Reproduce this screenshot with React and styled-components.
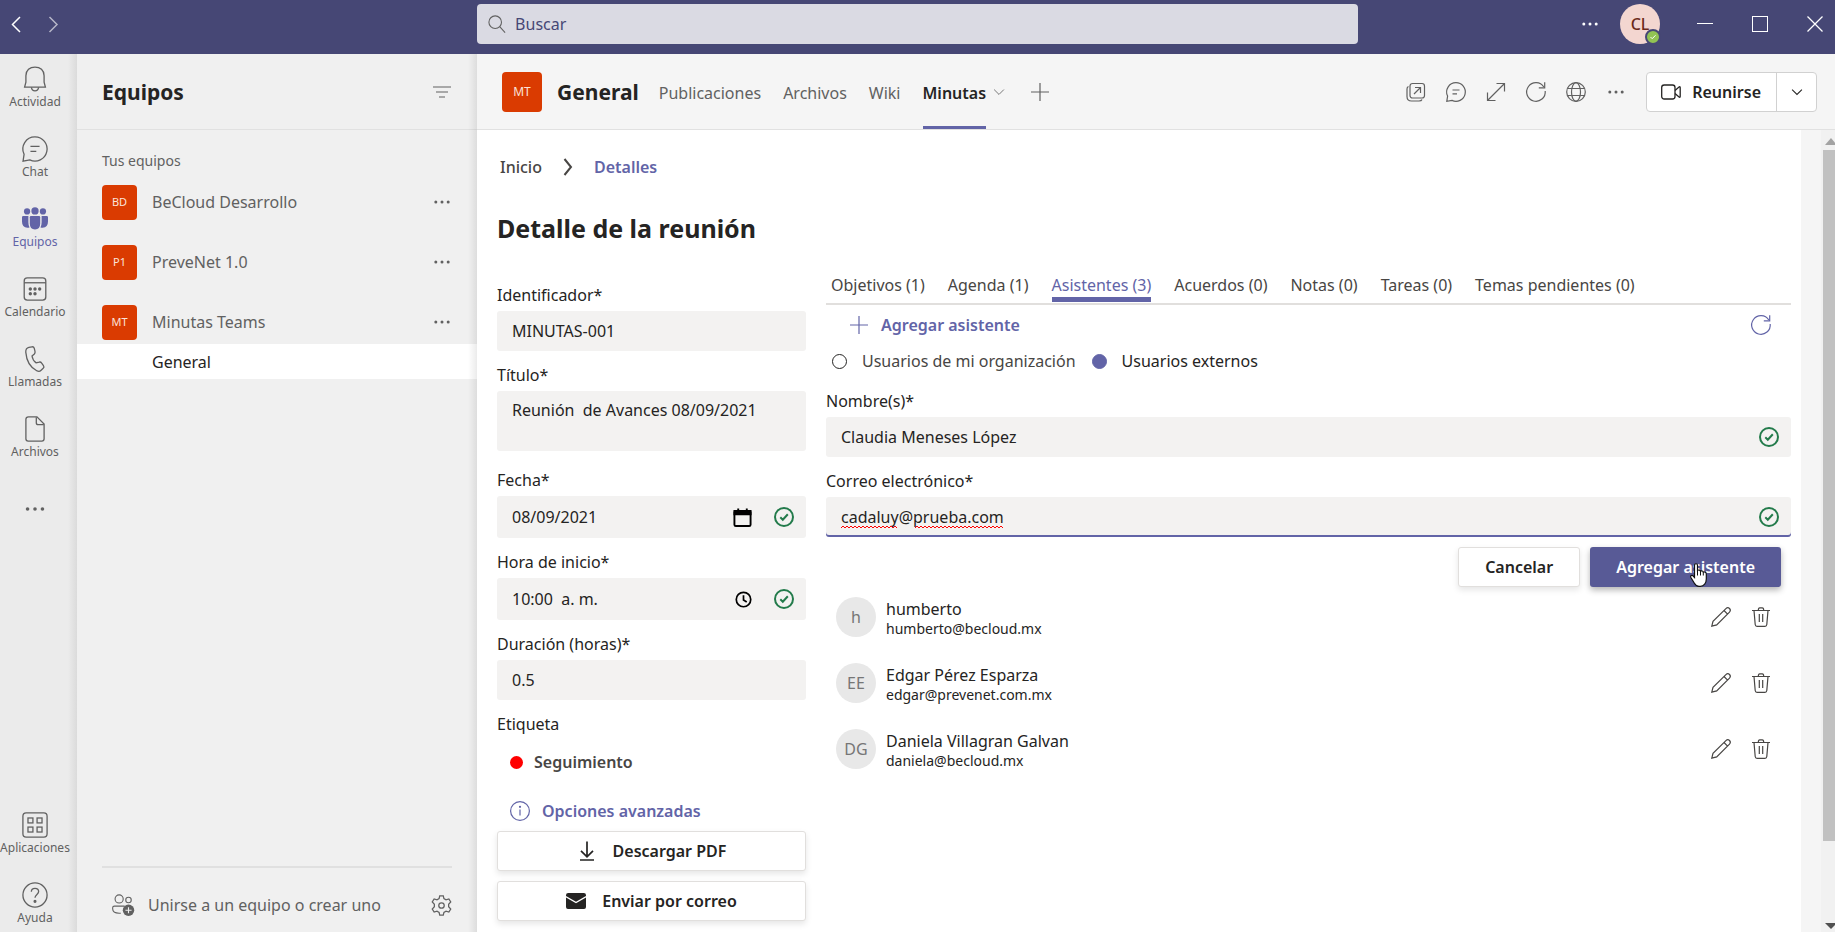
import { useState } from "react";
import { createGlobalStyle, styled } from "styled-components";

const railItems = [
  { label: "Actividad", icon: "bell" },
  { label: "Chat", icon: "chat" },
  { label: "Equipos", icon: "teams", active: true },
  { label: "Calendario", icon: "calendar" },
  { label: "Llamadas", icon: "phone" },
  { label: "Archivos", icon: "file" },
];

const teams = [
  { initials: "BD", name: "BeCloud Desarrollo" },
  { initials: "P1", name: "PreveNet 1.0" },
  { initials: "MT", name: "Minutas Teams" },
];

const meetingTabs = [
  "Objetivos (1)",
  "Agenda (1)",
  "Asistentes (3)",
  "Acuerdos (0)",
  "Notas (0)",
  "Tareas (0)",
  "Temas pendientes (0)",
];

const attendees = [
  { initials: "h", name: "humberto", email: "humberto@becloud.mx" },
  { initials: "EE", name: "Edgar Pérez Esparza", email: "edgar@prevenet.com.mx" },
  { initials: "DG", name: "Daniela Villagran Galvan", email: "daniela@becloud.mx" },
];

const shapes = {
  back: <path d="M12 3L4.500 10.500L12 18" />,
  forward: <path d="M4.500 3L12 10.500L4.500 18" />,
  search: (
    <>
      <circle cx="8" cy="8" r="7" />
      <path d="M13 13L19 19.500" />
    </>
  ),
  dots: (
    <g fill="currentColor" stroke="none">
      <circle cx="3.800" cy="10" r="1.500" />
      <circle cx="10" cy="10" r="1.500" />
      <circle cx="16.200" cy="10" r="1.500" />
    </g>
  ),
  minimize: <path d="M2 9.500H18" />,
  maximize: <rect x="2.500" y="2.500" width="15" height="15" />,
  close: <path d="M2.500 2.500L17.500 17.500M17.500 2.500L2.500 17.500" />,
  bell: (
    <>
      <path d="M2 16.300L3 12.500V7.500C3 3.300 6 .8 10 .8S17 3.300 17 7.500V12.500L18 16.300Z" />
      <path d="M7.200 16.500C7.500 18.300 8.500 19.200 10 19.200S12.500 18.300 12.800 16.500" />
    </>
  ),
  chat: (
    <>
      <path d="M10 .7A9.300 9.300 0 1 1 6 18.400L.8 19.300L1.600 14.100A9.300 9.300 0 0 1 10 .7Z" />
      <path d="M6.500 8H13.500M6.500 11.800H11" />
    </>
  ),
  teams: (
    <g fill="currentColor" stroke="none">
      <circle cx="3.900" cy="4.200" r="2.400" />
      <circle cx="16.100" cy="4.200" r="2.400" />
      <circle cx="10" cy="3.800" r="2.800" />
      <path d="M1 7.600H4.900V12.500Q4.900 15 5.800 16.500Q0 17.500 0 12V8.600Q0 7.600 1 7.600Z" />
      <path d="M19 7.600H15.100V12.500Q15.100 15 14.200 16.500Q20 17.500 20 12V8.600Q20 7.600 19 7.600Z" />
      <path d="M6.900 7.600H13.100Q14 7.600 14 8.600V13.500Q14 18.100 10 18.100T6 13.500V8.600Q6 7.600 6.900 7.600Z" />
    </g>
  ),
  calendar: (
    <>
      <rect x="1.700" y="1.500" width="16.600" height="17" rx="2.400" />
      <path d="M1.700 5.200H18.300" />
      <g fill="currentColor" stroke="none">
        <circle cx="6.400" cy="10" r="1.300" />
        <circle cx="10" cy="10" r="1.300" />
        <circle cx="13.600" cy="10" r="1.300" />
        <circle cx="6.400" cy="13.700" r="1.300" />
        <circle cx="10" cy="13.700" r="1.300" />
      </g>
    </>
  ),
  phone: (
    <path d="M5.300 1L7.700.6C8.500.5 9.200 1 9.400 1.700L10 4.200C10.200 5 10 5.600 9.500 6.100L7.700 7.700C8 9.700 9.400 12 10.900 13L13.200 12.400C13.900 12.200 14.600 12.400 15 13L16.500 15.100C17 15.800 16.900 16.700 16.300 17.200L14.700 18.700C13.900 19.500 12.700 19.700 11.600 19.200C6.500 16.700 3.400 11 2.900 4.700C2.800 2.500 3.500 1.400 5.300 1Z" />
  ),
  file: (
    <>
      <path d="M5 .7H11.500L17 6.200V17.500Q17 19.300 15.200 19.300H4.800Q3 19.300 3 17.500V2.500Q3 .7 5 .7Z" />
      <path d="M11 .9V5.200Q11 6.700 12.500 6.700H16.800" />
    </>
  ),
  apps: (
    <>
      <rect x=".7" y=".7" width="18.600" height="18.600" rx="2.500" />
      <rect x="4.600" y="4.600" width="3.800" height="3.800" />
      <rect x="11.600" y="4.600" width="3.800" height="3.800" />
      <rect x="4.600" y="11.600" width="3.800" height="3.800" />
      <rect x="11.600" y="11.600" width="3.800" height="3.800" />
    </>
  ),
  help: (
    <>
      <circle cx="10" cy="10" r="9.300" />
      <path d="M7.200 7.500C7.200 5.800 8.300 4.900 10 4.900S12.800 5.900 12.800 7.400C12.800 9.600 10 9.600 10 12.200" />
      <circle cx="10" cy="14.900" r=".7" fill="currentColor" />
    </>
  ),
  filter: <path d="M1 5H19M4 10H16M7 15H13" />,
  joinTeam: (
    <>
      <circle cx="6.500" cy="4.500" r="3.700" />
      <circle cx="15" cy="5.500" r="2.500" />
      <path d="M11.500 11H2.200Q.6 11 .6 12.600V13.500Q.6 17.500 6.500 17.500H8" />
      <circle cx="15" cy="14.800" r="5.200" fill="currentColor" stroke="none" />
      <path d="M15 12V17.600M12.200 14.800H17.800" stroke="#f0f0f0" />
    </>
  ),
  gear: (
    <>
      <circle cx="10" cy="10" r="2.600" />
      <path d="M8.300.8H11.700L12.300 3.500L14.300 4.600L17 3.800L18.800 6.700L16.800 8.800V11.200L18.800 13.300L17 16.200L14.300 15.400L12.300 16.500L11.700 19.200H8.300L7.700 16.500L5.700 15.400L3 16.200L1.200 13.300L3.200 11.200V8.800L1.200 6.700L3 3.800L5.700 4.600L7.700 3.500Z" />
    </>
  ),
  down: <path d="M3 6.500L10 13.500L17 6.500" />,
  plus: <path d="M10 1V19M1 10H19" />,
  popout: (
    <>
      <rect x="4" y="1.500" width="14.500" height="14.500" rx="2.500" />
      <path d="M2.500 4.500Q1 5 1 7V14.500Q1 19 5.500 19H13Q15.500 19 16 17.500" />
      <path d="M8 12L14.500 5.500M9 5.500H14.500V11" />
    </>
  ),
  expand: <path d="M1.500 18.500L18.500 1.500M10.500 1.500H18.500V9.500M1.500 10.500V18.500H9.500" />,
  refresh: (
    <>
      <path d="M19.200 9A9.300 9.300 0 1 1 17.800 5" />
      <path d="M18.700.3V5.800H12.800" />
    </>
  ),
  globe: (
    <>
      <circle cx="10" cy="10" r="9.300" />
      <ellipse cx="10" cy="10" rx="4.500" ry="9.300" />
      <path d="M1.500 6.500H18.500M1.500 13.500H18.500" />
    </>
  ),
  camera: (
    <>
      <rect x=".7" y="3" width="13.300" height="14" rx="2.500" />
      <path d="M14 8.500L18 5Q19.200 4.300 19.200 5.800V14.200Q19.200 15.700 18 15L14 11.500" />
    </>
  ),
  crumb: <path d="M6.500 2L13 10L6.500 18" />,
  date: (
    <>
      <path d="M1.500 4.500Q1.500 3 3 3H17Q18.500 3 18.500 4.500V17.500Q18.500 19 17 19H3Q1.500 19 1.500 17.500Z" />
      <path d="M1.500 3H18.500V6.500H1.500Z" fill="currentColor" />
      <path d="M5.500 .5V4M14.500 .5V4" />
    </>
  ),
  clock: (
    <>
      <circle cx="10" cy="10" r="8.500" />
      <path d="M10 5V10.500L13.800 13" />
    </>
  ),
  check: (
    <>
      <circle cx="10" cy="10" r="9" />
      <path d="M6.300 10.300L8.800 12.700L13.800 7.300" />
    </>
  ),
  info: (
    <>
      <circle cx="10" cy="10" r="9.400" />
      <path d="M10 8.500V14.500" />
      <circle cx="10" cy="5.800" r=".5" fill="currentColor" />
    </>
  ),
  download: <path d="M10 .5V15.500M4 9.800L10 15.800L16 9.800M3 19H17" />,
  mail: (
    <g fill="currentColor" stroke="none">
      <path d="M0 4.200Q0 2 2.200 2H17.800Q20 2 20 4.200V5L10 10.800L0 5Z" />
      <path d="M0 6.500L10 12.300L20 6.500V16Q20 18 18 18H2Q0 18 0 16Z" />
    </g>
  ),
  pencil: (
    <path d="M.8 19.200L2 14.300L14.900 1.600Q16.800-.1 18.500 1.500Q20.200 3.200 18.500 5.100L5.700 17.900ZM13 3.500L16.600 7.100" />
  ),
  trash: (
    <path d="M1 3.500H19M3 3.500L4.200 17.500Q4.400 19.300 6 19.300H14Q15.600 19.300 15.800 17.500L17 3.500M7.300 3.500Q7.300 .8 8.700 .8H11.300Q12.700 .8 12.700 3.500M8.300 7V15M11.700 7V15" />
  ),
};

function Icon({ name, size = 20, weight = 1 }) {
  return (
    <svg
      width={size}
      height={size}
      viewBox="0 0 20 20"
      fill="none"
      stroke="currentColor"
      strokeWidth={weight}
      overflow="visible"
      aria-hidden="true"
    >
      {shapes[name]}
    </svg>
  );
}

function RailItem({ item }) {
  return (
    <SCRailItem $active={item.active}>
      <Icon name={item.icon} size={26} />
      {item.label}
    </SCRailItem>
  );
}

function Field({ id, label, value, onChange, icon, valid, tall, focused, children }) {
  return (
    <SCField>
      <label htmlFor={id}>{label}</label>
      <SCInputBox $tall={tall} $focused={focused}>
        <input id={id} value={value} onChange={onChange} spellCheck={false} />
        {children}
        {icon && (
          <SCPicker aria-label={`Elegir ${label}`}>
            <Icon name={icon} size={icon === "date" ? 19 : 17} weight={2} />
          </SCPicker>
        )}
        {valid && (
          <SCValid>
            <Icon name="check" weight={2} />
          </SCValid>
        )}
      </SCInputBox>
    </SCField>
  );
}

function Squiggle({ width }) {
  const steps = Math.floor(width / 4);
  return (
    <svg width={width} height="4" fill="none" stroke="#f00" aria-hidden="true">
      <path d={"M0 3" + " l2 -2 l2 2".repeat(steps)} />
    </svg>
  );
}

export default function App() {
  const [form, setForm] = useState({
    id: "MINUTAS-001",
    title: "Reunión  de Avances 08/09/2021",
    date: "08/09/2021",
    time: "10:00  a. m.",
    duration: "0.5",
    name: "Claudia Meneses López",
    email: "cadaluy@prueba.com",
  });
  const [userType, setUserType] = useState("external");

  const update = (key) => (e) => setForm({ ...form, [key]: e.target.value });

  return (
    <SCPage>
      <GlobalStyle />
      <SCTopBar>
        <SCHistory>
          <button aria-label="Atrás">
            <Icon name="back" weight={1.5} />
          </button>
          <button aria-label="Adelante" disabled>
            <Icon name="forward" weight={1.5} />
          </button>
        </SCHistory>
        <SCSearch>
          <Icon name="search" size={18} weight={1.2} />
          <input aria-label="Buscar" placeholder="Buscar" />
        </SCSearch>
        <SCWindowControls>
          <button aria-label="Más opciones">
            <Icon name="dots" />
          </button>
          <SCProfile aria-label="Perfil">
            CL
            <SCPresence>
              <svg width="8" height="8" viewBox="0 0 8 8" fill="none" stroke="white">
                <path d="M1.500 4L3.200 5.700L6.500 2.300" />
              </svg>
            </SCPresence>
          </SCProfile>
          <button aria-label="Minimizar">
            <Icon name="minimize" />
          </button>
          <button aria-label="Maximizar">
            <Icon name="maximize" />
          </button>
          <button aria-label="Cerrar">
            <Icon name="close" weight={1.3} />
          </button>
        </SCWindowControls>
      </SCTopBar>

      <SCBody>
        <SCRail>
          {railItems.map((item) => (
            <RailItem key={item.label} item={item} />
          ))}
          <SCRailItem aria-label="Más aplicaciones">
            <Icon name="dots" size={24} />
          </SCRailItem>
          <SCSpacer />
          <RailItem item={{ label: "Aplicaciones", icon: "apps" }} />
          <RailItem item={{ label: "Ayuda", icon: "help" }} />
        </SCRail>

        <SCTeams>
          <SCTeamsHeader>
            <h2>Equipos</h2>
            <button aria-label="Filtrar">
              <Icon name="filter" weight={1.2} />
            </button>
          </SCTeamsHeader>
          <SCTeamsCaption>Tus equipos</SCTeamsCaption>
          {teams.map((team) => (
            <SCTeamRow key={team.name}>
              <SCTeamAvatar $size={35}>{team.initials}</SCTeamAvatar>
              <span>{team.name}</span>
              <button aria-label={`Opciones de ${team.name}`}>
                <Icon name="dots" />
              </button>
            </SCTeamRow>
          ))}
          <SCChannel href="#general">General</SCChannel>
          <SCSpacer />
          <SCTeamsFooter>
            <button>
              <Icon name="joinTeam" size={22} />
              Unirse a un equipo o crear uno
            </button>
            <button aria-label="Administrar equipos">
              <Icon name="gear" size={21} weight={1.2} />
            </button>
          </SCTeamsFooter>
        </SCTeams>

        <SCMain>
          <SCChannelHeader>
            <SCTeamAvatar $size={40}>MT</SCTeamAvatar>
            <h1>General</h1>
            <SCChannelTabs>
              <a href="#publicaciones">Publicaciones</a>
              <a href="#archivos">Archivos</a>
              <a href="#wiki">Wiki</a>
              <a href="#minutas" aria-current="page">
                Minutas
              </a>
            </SCChannelTabs>
            <SCTabExtras>
              <button aria-label="Opciones de la pestaña">
                <Icon name="down" size={14} weight={1.2} />
              </button>
              <button aria-label="Agregar una pestaña">
                <Icon name="plus" weight={1.2} />
              </button>
            </SCTabExtras>
            <SCSpacer />
            <SCActions>
              <button aria-label="Abrir en otra ventana">
                <Icon name="popout" weight={1.2} />
              </button>
              <button aria-label="Conversación">
                <Icon name="chat" weight={1.2} />
              </button>
              <button aria-label="Expandir">
                <Icon name="expand" weight={1.2} />
              </button>
              <button aria-label="Recargar">
                <Icon name="refresh" weight={1.2} />
              </button>
              <button aria-label="Ir al sitio web">
                <Icon name="globe" weight={1.2} />
              </button>
              <button aria-label="Más opciones">
                <Icon name="dots" />
              </button>
            </SCActions>
            <SCMeet>
              <button>
                <Icon name="camera" weight={1.3} />
                Reunirse
              </button>
              <button aria-label="Opciones de reunión">
                <Icon name="down" size={14} weight={1.5} />
              </button>
            </SCMeet>
          </SCChannelHeader>

          <SCStage>
            <SCContent>
              <SCBreadcrumb>
                <a href="#inicio">Inicio</a>
                <Icon name="crumb" weight={2} />
                <a href="#detalles" aria-current="page">
                  Detalles
                </a>
              </SCBreadcrumb>
              <SCTitle>Detalle de la reunión</SCTitle>

              <SCColumns>
                <SCForm>
                  <Field id="id" label="Identificador*" value={form.id} onChange={update("id")} />
                  <SCField $area>
                    <label htmlFor="title">Título*</label>
                    <textarea
                      id="title"
                      value={form.title}
                      onChange={update("title")}
                      spellCheck={false}
                    />
                  </SCField>
                  <Field
                    id="date"
                    label="Fecha*"
                    value={form.date}
                    onChange={update("date")}
                    icon="date"
                    valid
                    tall
                  />
                  <Field
                    id="time"
                    label="Hora de inicio*"
                    value={form.time}
                    onChange={update("time")}
                    icon="clock"
                    valid
                    tall
                  />
                  <Field
                    id="duration"
                    label="Duración (horas)*"
                    value={form.duration}
                    onChange={update("duration")}
                  />
                  <SCTagLabel>Etiqueta</SCTagLabel>
                  <SCTag>
                    <SCDot />
                    Seguimiento
                  </SCTag>
                  <SCTextButton>
                    <Icon name="info" weight={1.2} />
                    Opciones avanzadas
                  </SCTextButton>
                  <SCFormButtons>
                    <SCButton>
                      <Icon name="download" weight={1.7} />
                      Descargar PDF
                    </SCButton>
                    <SCButton>
                      <Icon name="mail" />
                      Enviar por correo
                    </SCButton>
                  </SCFormButtons>
                </SCForm>

                <SCDetails>
                  <SCMeetingTabs>
                    {meetingTabs.map((tab) => (
                      <SCMeetingTab key={tab} $active={tab.startsWith("Asistentes")}>
                        {tab}
                      </SCMeetingTab>
                    ))}
                  </SCMeetingTabs>
                  <SCAddBar>
                    <SCTextButton>
                      <Icon name="plus" weight={1.2} />
                      Agregar asistente
                    </SCTextButton>
                    <SCTextButton aria-label="Actualizar">
                      <Icon name="refresh" weight={1.2} />
                    </SCTextButton>
                  </SCAddBar>
                  <SCRadios>
                    <label>
                      <input
                        type="radio"
                        name="userType"
                        checked={userType === "internal"}
                        onChange={() => setUserType("internal")}
                      />
                      Usuarios de mi organización
                    </label>
                    <label>
                      <input
                        type="radio"
                        name="userType"
                        checked={userType === "external"}
                        onChange={() => setUserType("external")}
                      />
                      Usuarios externos
                    </label>
                  </SCRadios>
                  <SCForm>
                    <Field
                      id="name"
                      label="Nombre(s)*"
                      value={form.name}
                      onChange={update("name")}
                      valid
                    />
                    <Field
                      id="email"
                      label="Correo electrónico*"
                      value={form.email}
                      onChange={update("email")}
                      valid
                      focused
                    >
                      <SCSpelling>
                        <Squiggle width={56} />
                        <Squiggle width={88} />
                      </SCSpelling>
                    </Field>
                  </SCForm>
                  <SCFormActions>
                    <SCButton>Cancelar</SCButton>
                    <SCButton $primary>
                      Agregar asistente
                      <SCPointer width="17" height="24" viewBox="0 0 17 24" aria-hidden="true">
                        <path
                          d="M4.500 14.500V2.300C4.500.2 7.500.2 7.500 2.300V7.500C8.500 6.600 10.300 7 10.500 8.300C11.600 7.500 13 8 13.300 9.200C14.800 8.600 16.300 9.500 16.300 11V16C16.300 20 14 23.300 10.300 23.300H9C6.500 23.300 5.200 21.800 4.200 20L.9 14.500C0 12.800 2 11.500 3.200 13Z"
                          fill="#fff"
                          stroke="#111"
                          strokeWidth="1.200"
                        />
                        <path
                          d="M7.500 7V12.500M10.500 8.300V12.500M13.300 9.200V12.500"
                          fill="none"
                          stroke="#111"
                        />
                      </SCPointer>
                    </SCButton>
                  </SCFormActions>
                  <SCAttendees>
                    {attendees.map((person) => (
                      <SCAttendee key={person.email}>
                        <SCAvatar>{person.initials}</SCAvatar>
                        <div>
                          <p>{person.name}</p>
                          <small>{person.email}</small>
                        </div>
                        <button aria-label={`Editar ${person.name}`}>
                          <Icon name="pencil" weight={1.2} />
                        </button>
                        <button aria-label={`Eliminar ${person.name}`}>
                          <Icon name="trash" weight={1.2} />
                        </button>
                      </SCAttendee>
                    ))}
                  </SCAttendees>
                </SCDetails>
              </SCColumns>
            </SCContent>
            <SCScrollbar aria-hidden="true">
              <svg width="12" height="8">
                <path d="M2 8L8 1L14 8Z" fill="#a3a3a3" />
              </svg>
              <SCThumb />
              <svg width="12" height="8">
                <path d="M2 0L8 6L14 0Z" fill="#505050" />
              </svg>
            </SCScrollbar>
          </SCStage>
        </SCMain>
      </SCBody>
    </SCPage>
  );
}

const GlobalStyle = createGlobalStyle`
  * {
    box-sizing: border-box;
  }

  body {
    margin: 0;
    font-family: "Noto Sans", "Open Sans", sans-serif;
    font-size: 16px;
    line-height: 24px;
    color: #252423;
  }

  h1, h2, h3, p, ul {
    margin: 0;
    padding: 0;
  }

  button, input, textarea {
    font: inherit;
    color: inherit;
    border: none;
    background: none;
    padding: 0;
    outline: none;
  }

  button {
    display: inline-flex;
    align-items: center;
    justify-content: center;
    white-space: nowrap;
  }

  a {
    color: inherit;
    text-decoration: none;
  }

  svg {
    flex-shrink: 0;
  }
`;

const SCPage = styled.div`
  min-height: 100vh;
  display: flex;
  flex-direction: column;
`;

const SCTopBar = styled.header`
  height: 54px;
  padding: 4px 8px 10px;
  display: grid;
  grid-template-columns: 1fr 48vw 1fr;
  align-items: center;
  background-color: #464775;
  color: white;
`;

const SCHistory = styled.nav`
  display: flex;
  gap: 17px;

  > button:disabled {
    opacity: 0.6;
  }
`;

const SCSearch = styled.div`
  height: 40px;
  padding: 0 11px;
  display: flex;
  align-items: center;
  gap: 9px;
  border-radius: 4px;
  background-color: #dadae3;
  color: #616161;

  > input {
    flex: 1;
    color: #464775;
  }

  > input::placeholder {
    color: #464775;
    opacity: 1;
  }
`;

const SCWindowControls = styled.div`
  padding-right: 2px;
  display: flex;
  justify-content: flex-end;
  align-items: center;
  gap: 35px;

  > button:first-child {
    margin-right: -15px;
  }
`;

const SCProfile = styled.button`
  position: relative;
  width: 40px;
  height: 40px;
  border-radius: 50%;
  background-color: #f3d6d0;
  color: #6b2a1a;
  font-size: 16px;
  font-weight: 500;
`;

const SCPresence = styled.span`
  position: absolute;
  right: -1px;
  bottom: -1px;
  width: 16px;
  height: 16px;
  display: flex;
  align-items: center;
  justify-content: center;
  border-radius: 50%;
  border: 2px solid #464775;
  background-color: #92c353;
`;

const SCBody = styled.div`
  flex: 1;
  display: flex;
`;

const SCRail = styled.nav`
  width: 77px;
  padding: 8px 7px 0 0;
  display: flex;
  flex-direction: column;
  gap: 16px;
  background: linear-gradient(to left, #dbdbdb, #ebebeb 9px);
`;

const SCRailItem = styled.button`
  height: 54px;
  flex-direction: column;
  font-size: 12px;
  line-height: 20px;
  color: ${({ $active }) => ($active ? "#6264a7" : "#616161")};
`;

const SCSpacer = styled.div`
  flex: 1;
`;

const SCTeams = styled.aside`
  position: relative;
  width: 400px;
  display: flex;
  flex-direction: column;
  background-color: #f0f0f0;
  color: #616161;

  &::after {
    content: "";
    position: absolute;
    top: 0;
    right: 0;
    bottom: 0;
    width: 9px;
    background: linear-gradient(to left, rgba(0, 0, 0, 0.08), transparent);
    pointer-events: none;
  }
`;

const SCTeamsHeader = styled.div`
  height: 76px;
  padding: 0 25px;
  display: flex;
  align-items: center;
  justify-content: space-between;
  border-bottom: 1px solid #e1e1e1;

  > h2 {
    font-size: 21px;
    font-weight: 700;
    color: #252423;
  }
`;

const SCTeamsCaption = styled.p`
  padding: 19px 25px 0;
  margin-bottom: -1px;
  font-size: 14px;
`;

const SCTeamRow = styled.div`
  height: 60px;
  padding: 0 25px;
  display: flex;
  align-items: center;
  gap: 15px;

  > span {
    flex: 1;
  }
`;

const SCTeamAvatar = styled.div`
  width: ${({ $size }) => $size}px;
  height: ${({ $size }) => $size}px;
  display: flex;
  align-items: center;
  justify-content: center;
  flex-shrink: 0;
  border-radius: 4px;
  background-color: #da3b01;
  color: #fbe3da;
  font-size: ${({ $size }) => ($size > 35 ? 12 : 11)}px;
`;

const SCChannel = styled.a`
  height: 35px;
  margin-top: -8px;
  padding-left: 75px;
  display: flex;
  align-items: center;
  background-color: white;
  color: #252423;
`;

const SCTeamsFooter = styled.div`
  margin: 0 25px;
  padding: 25px 0 15px 10px;
  display: flex;
  justify-content: space-between;
  border-top: 2px solid #e0e0e0;

  > button {
    gap: 14px;
  }
`;

const SCMain = styled.main`
  flex: 1;
  min-width: 0;
  display: flex;
  flex-direction: column;
`;

const SCChannelHeader = styled.div`
  height: 76px;
  padding: 0 18px 0 25px;
  display: flex;
  align-items: center;
  background-color: #f5f5f5;
  border-bottom: 1px solid #e1e1e1;
  color: #616161;

  > h1 {
    margin: 0 20px 0 15px;
    font-size: 21px;
    font-weight: 700;
    color: #252423;
  }
`;

const SCChannelTabs = styled.nav`
  align-self: stretch;
  display: flex;
  gap: 22px;

  > a {
    padding-top: 2px;
    display: flex;
    align-items: center;
    border-top: 3px solid transparent;
    border-bottom: 3px solid transparent;
  }

  > a[aria-current] {
    border-bottom-color: #6264a7;
    color: #252423;
    font-weight: 600;
  }
`;

const SCTabExtras = styled.div`
  margin-left: 6px;
  display: flex;
  align-items: center;
  gap: 24px;
`;

const SCActions = styled.div`
  margin-right: 20px;
  display: flex;
  gap: 20px;
`;

const SCMeet = styled.div`
  height: 40px;
  display: flex;
  border: 1px solid #d1d1d1;
  border-radius: 4px;
  background-color: white;
  color: #252423;
  font-weight: 600;

  > button:first-child {
    padding: 0 15px 0 14px;
    gap: 11px;
  }

  > button:last-child {
    width: 40px;
    border-left: 1px solid #d1d1d1;
  }
`;

const SCStage = styled.div`
  flex: 1;
  display: flex;
  background-color: #f5f5f5;
`;

const SCContent = styled.div`
  flex: 1;
  min-width: 0;
  margin-right: 20px;
  padding: 25px 10px 8px 20px;
  background-color: white;
`;

const SCBreadcrumb = styled.nav`
  padding-left: 3px;
  display: flex;
  align-items: center;
  gap: 16px;
  font-weight: 500;
  color: #484644;

  > a[aria-current] {
    color: #6264a7;
    font-weight: 600;
  }
`;

const SCTitle = styled.h2`
  margin-top: 31px;
  font-size: 25px;
  line-height: 36px;
  font-weight: 700;
`;

const SCColumns = styled.div`
  margin-top: 27px;
  display: grid;
  grid-template-columns: minmax(0, 309fr) minmax(0, 965fr);
  gap: 20px;
`;

const SCForm = styled.div`
  padding-top: 10px;
  display: flex;
  flex-direction: column;
  gap: 12px;
`;

const SCField = styled.div`
  display: flex;
  flex-direction: column;
  gap: 4px;
  padding-bottom: ${({ $area }) => ($area ? 5 : 0)}px;

  > textarea {
    height: 60px;
    padding: 7px 15px;
    border-radius: 3px;
    background-color: #f3f2f1;
    resize: none;
    white-space: pre-wrap;
  }
`;

const SCInputBox = styled.div`
  position: relative;
  height: ${({ $tall }) => ($tall ? 42 : 40)}px;
  padding: 0 12px 0 15px;
  display: flex;
  align-items: center;
  gap: 22px;
  border-radius: 3px;
  background-color: #f3f2f1;
  box-shadow: ${({ $focused }) => ($focused ? "inset 0 -2px #6264a7" : "none")};

  > input {
    flex: 1;
    min-width: 0;
  }
`;

const SCPicker = styled.button`
  color: black;
`;

const SCValid = styled.span`
  display: flex;
  color: #237b4b;
`;

const SCSpelling = styled.span`
  position: absolute;
  left: 15px;
  bottom: 8px;
  display: flex;
  gap: 18px;
`;

const SCTagLabel = styled.p`
  color: #252423;
`;

const SCTag = styled.button`
  height: 40px;
  margin: -6px 0 -3px;
  padding-left: 13px;
  justify-content: flex-start;
  gap: 11px;
  color: #484644;
  font-weight: 600;
`;

const SCDot = styled.span`
  width: 13px;
  height: 13px;
  border-radius: 50%;
  background-color: red;
`;

const SCTextButton = styled.button`
  height: 40px;
  padding: 0 13px;
  justify-content: flex-start;
  gap: 12px;
  color: #6264a7;
  font-weight: 600;
`;

const SCFormButtons = styled.div`
  margin-top: -12px;
  display: flex;
  flex-direction: column;
  gap: 10px;
`;

const SCButton = styled.button`
  position: relative;
  height: 40px;
  padding: 0 26px;
  gap: 16px;
  border: ${({ $primary }) => ($primary ? "none" : "1px solid #e1dfdd")};
  border-radius: 3px;
  background-color: ${({ $primary }) => ($primary ? "#585a96" : "white")};
  color: ${({ $primary }) => ($primary ? "white" : "#252423")};
  box-shadow: 0 3px 6px rgba(0, 0, 0, ${({ $primary }) => ($primary ? 0.3 : 0.1)});
  font-weight: 600;
`;

const SCDetails = styled.section`
  min-width: 0;
`;

const SCMeetingTabs = styled.div`
  padding: 0 5px 1px;
  display: flex;
  gap: 23px;
  border-bottom: 2px solid #e1dfdd;
`;

const SCMeetingTab = styled.button`
  height: 29px;
  border-bottom: 5px solid ${({ $active }) => ($active ? "#6264a7" : "transparent")};
  color: ${({ $active }) => ($active ? "#6264a7" : "#484644")};
`;

const SCAddBar = styled.div`
  padding: 0 7px 0 10px;
  display: flex;
  justify-content: space-between;
`;

const SCRadios = styled.div`
  display: flex;
  gap: 16px;
  padding: 0 0 2px 6px;

  > label {
    height: 32px;
    display: flex;
    align-items: center;
    gap: 15px;
    color: #484644;
  }

  > label:last-child {
    color: #252423;
  }

  input {
    appearance: none;
    width: 15px;
    height: 15px;
    margin: 0;
    border: 1px solid #252423;
    border-radius: 50%;
  }

  input:checked {
    border-color: #6264a7;
    background-color: #6264a7;
  }
`;

const SCFormActions = styled.div`
  padding: 10px;
  display: flex;
  justify-content: flex-end;
  gap: 10px;
`;

const SCPointer = styled.svg`
  position: absolute;
  left: 100px;
  top: 16px;
`;

const SCAttendees = styled.ul`
  display: flex;
  flex-direction: column;
  gap: 26px;
`;

const SCAttendee = styled.li`
  height: 40px;
  padding: 0 20px 0 10px;
  display: flex;
  align-items: center;
  gap: 20px;
  color: #484644;

  > div:nth-child(2) {
    flex: 1;
    margin-left: -10px;
    padding-top: 4px;
    display: flex;
    flex-direction: column;
    color: #252423;
  }

  p,
  small {
    line-height: 20px;
  }

  small {
    font-size: 14px;
  }
`;

const SCAvatar = styled.div`
  width: 40px;
  height: 40px;
  display: flex;
  align-items: center;
  justify-content: center;
  border-radius: 50%;
  background-color: #e8e8e8;
  color: #767676;
`;

const SCScrollbar = styled.div`
  width: 14px;
  padding: 7px 0 1px 2px;
  display: flex;
  flex-direction: column;
  background-color: #f1f1f1;
`;

const SCThumb = styled.div`
  flex: 1;
  margin: 5px 0 82px;
  background-color: #c1c1c1;
`;
